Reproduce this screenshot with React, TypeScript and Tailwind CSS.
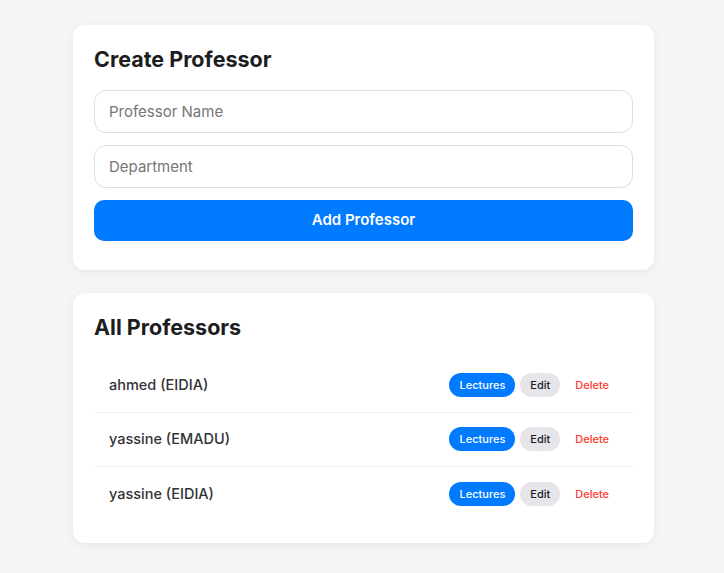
import { useState } from 'react';

type Professor = {
    id: number;
    name: string;
    department: string;
};

const initialProfessors: Professor[] = [
    { id: 1, name: 'ahmed', department: 'EIDIA' },
    { id: 2, name: 'yassine', department: 'EMADU' },
    { id: 3, name: 'yassine', department: 'EIDIA' }
];

const App = () => {
    const [professors, setProfessors] = useState<Professor[]>(initialProfessors);
    const [name, setName] = useState('');
    const [department, setDepartment] = useState('');

    const addProfessor = () => {
        if (!name.trim() || !department.trim()) return;
        setProfessors([...professors, { id: Date.now(), name, department }]);
        setName('');
        setDepartment('');
    };

    const deleteProfessor = (id: number) => {
        setProfessors(professors.filter((p) => p.id !== id));
    };

    return (
        <div
            className="min-h-screen bg-[#f5f5f7] pt-[25px] pb-8"
            style={{ fontFamily: 'Inter, "Noto Sans", sans-serif' }}
        >
            <div className="w-[581px] ml-[73px] flex flex-col gap-[23px]">
                {/* Create form */}
                <div className="bg-white rounded-xl shadow-[0_2px_8px_rgba(0,0,0,0.06)] px-[21px] pt-[22px] pb-[29px]">
                    <h2 className="text-[21.5px] leading-[24px] font-bold text-[#1d1d1f] mb-[19px]">
                        Create Professor
                    </h2>
                    <div className="flex flex-col gap-3">
                        <input
                            type="text"
                            placeholder="Professor Name"
                            value={name}
                            onChange={(e) => setName(e.target.value)}
                            className="h-[43px] w-full px-[14px] rounded-xl border border-[#dedee2] text-[15px] text-[#1d1d1f] placeholder:text-[#767676] outline-none"
                        />
                        <input
                            type="text"
                            placeholder="Department"
                            value={department}
                            onChange={(e) => setDepartment(e.target.value)}
                            className="h-[43px] w-full px-[14px] rounded-xl border border-[#dedee2] text-[15px] text-[#1d1d1f] placeholder:text-[#767676] outline-none"
                        />
                        <button
                            onClick={addProfessor}
                            className="h-[41px] w-full rounded-[10px] bg-[#007aff] text-white text-[15px] font-semibold"
                        >
                            Add Professor
                        </button>
                    </div>
                </div>

                {/* List */}
                <div className="bg-white rounded-xl shadow-[0_2px_8px_rgba(0,0,0,0.06)] px-[21px] pt-[22px] pb-[21px]">
                    <h2 className="text-[21.5px] leading-[24px] font-bold text-[#1d1d1f] mb-[19px]">
                        All Professors
                    </h2>
                    <ul>
                        {professors.map((p, i) => (
                            <li
                                key={p.id}
                                className={`h-[54.5px] flex items-center justify-between pl-[15px] pr-[14px] ${
                                    i < professors.length - 1 ? 'border-b border-[#f0f0f2]' : ''
                                }`}
                            >
                                <span className="text-[14.5px] font-medium text-[#333336]">
                                    {p.name} ({p.department})
                                </span>
                                <div className="flex items-center gap-[5px]">
                                    <button className="h-[24px] px-[10px] rounded-full bg-[#007aff] text-white text-[11px] font-medium">
                                        Lectures
                                    </button>
                                    <button className="h-[24px] px-[10px] rounded-full bg-[#e5e5ea] text-[#1d1d1f] text-[11px] font-medium">
                                        Edit
                                    </button>
                                    <button
                                        onClick={() => deleteProfessor(p.id)}
                                        className="h-[24px] px-[10px] rounded-full text-[#ff3b30] text-[11px] font-medium"
                                    >
                                        Delete
                                    </button>
                                </div>
                            </li>
                        ))}
                    </ul>
                </div>
            </div>
        </div>
    );
};

export default App;
